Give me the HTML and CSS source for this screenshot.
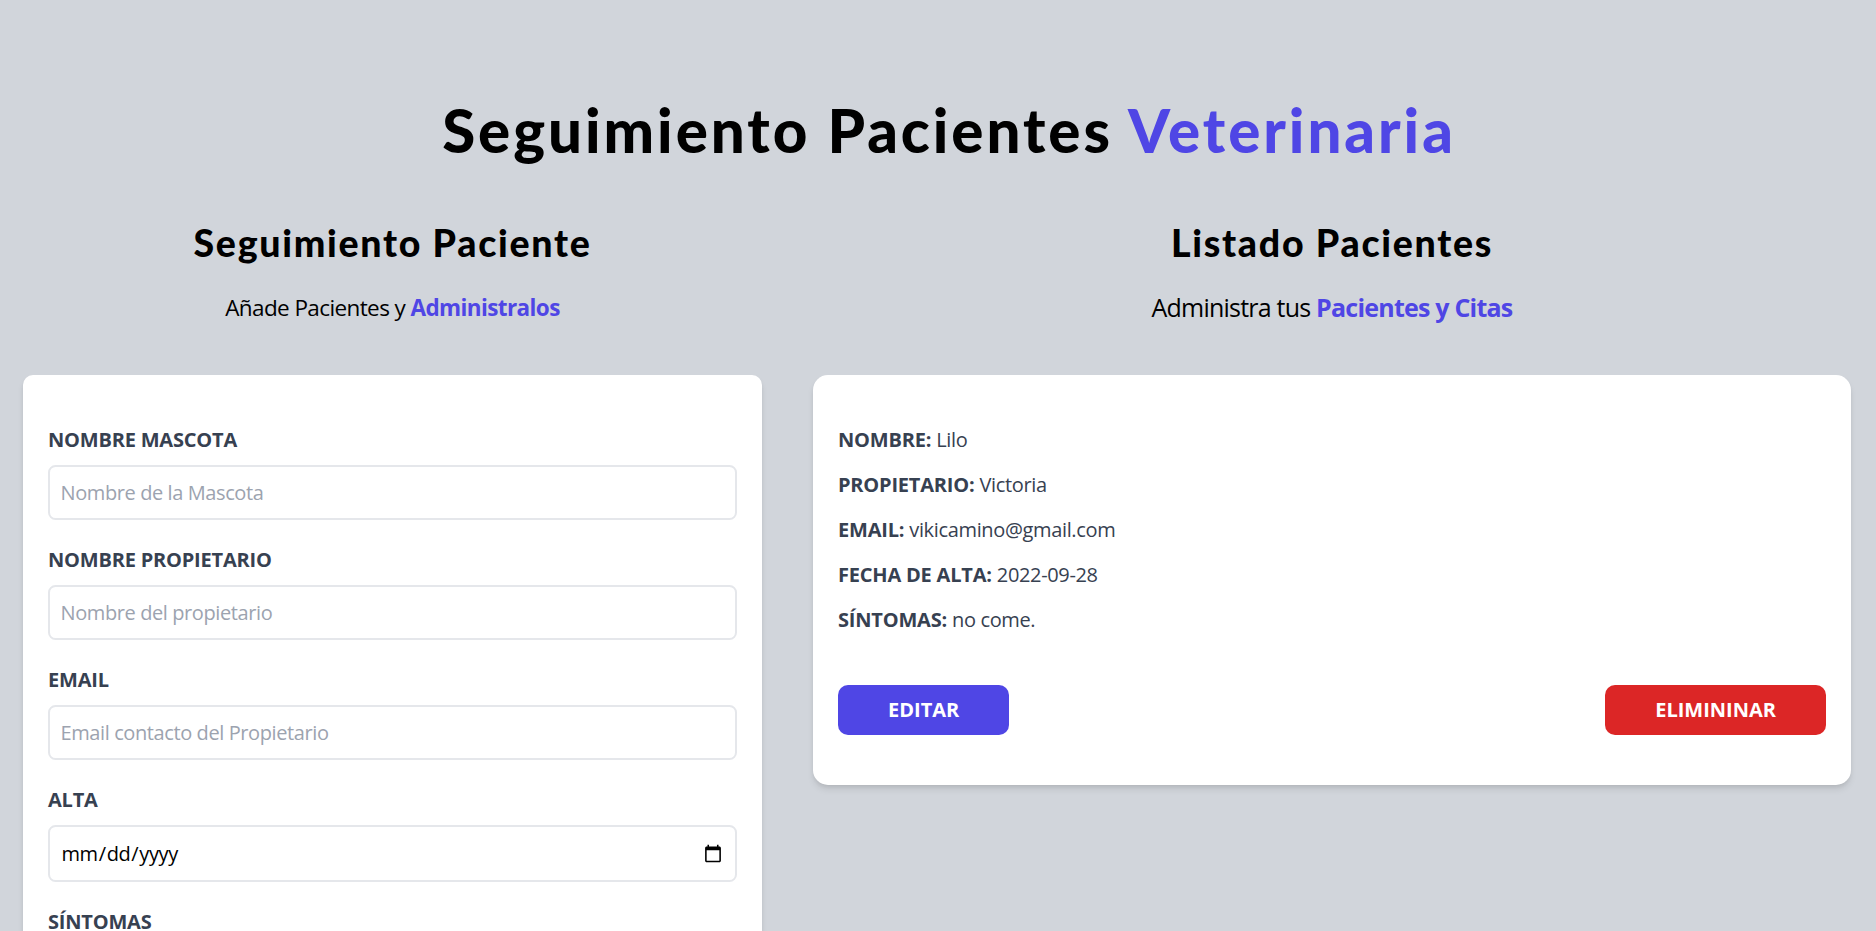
FILE: index.html
```html
<!DOCTYPE html>
<html lang="es">
<head>
<meta charset="utf-8">
<title>Seguimiento Pacientes Veterinaria</title>
<link rel="stylesheet" href="styles.css">
</head>
<body>
<div class="page">
  <h1 class="title">Seguimiento Pacientes <span class="accent">Veterinaria</span></h1>
  <div class="columns">
    <div class="col-form">
      <h2 class="col-title">Seguimiento Paciente</h2>
      <p class="col-sub">Añade Pacientes y <span class="accent-bold">Administralos</span></p>
      <form class="card form-card">
        <div class="field">
          <label class="label" for="mascota">Nombre Mascota</label>
          <input class="input" id="mascota" type="text" placeholder="Nombre de la Mascota">
        </div>
        <div class="field">
          <label class="label" for="propietario">Nombre Propietario</label>
          <input class="input" id="propietario" type="text" placeholder="Nombre del propietario">
        </div>
        <div class="field">
          <label class="label" for="email">Email</label>
          <input class="input" id="email" type="email" placeholder="Email contacto del Propietario">
        </div>
        <div class="field">
          <label class="label" for="alta">Alta</label>
          <input class="input input-date" id="alta" type="date">
        </div>
        <div class="field">
          <label class="label" for="sintomas">Síntomas</label>
          <textarea class="input textarea" id="sintomas" placeholder="Describe los Síntomas"></textarea>
        </div>
        <button class="submit" type="button">Agregar Paciente</button>
      </form>
    </div>
    <div class="col-list">
      <h2 class="col-title">Listado Pacientes</h2>
      <p class="col-sub col-sub-lg">Administra tus <span class="accent-bold">Pacientes y Citas</span></p>
      <div class="card patient-card">
        <p class="row">Nombre: <span class="value">Lilo</span></p>
        <p class="row">Propietario: <span class="value">Victoria</span></p>
        <p class="row">Email: <span class="value">vikicamino@gmail.com</span></p>
        <p class="row">Fecha de Alta: <span class="value">2022-09-28</span></p>
        <p class="row">Síntomas: <span class="value">no come.</span></p>
        <div class="actions">
          <button class="btn btn-edit" type="button">Editar</button>
          <button class="btn btn-delete" type="button">Elimininar</button>
        </div>
      </div>
    </div>
  </div>
</div>
</body>
</html>
```
FILE: styles.css
```css
* { box-sizing: border-box; }
html, body { margin: 0; padding: 0; }
body {
  background: #d1d5db;
  font-family: "Open Sans", "Noto Sans", sans-serif;
  color: #000;
}
.page {
  padding-top: 100px;
}
.title {
  margin: 0;
  padding-left: 22px;
  text-align: center;
  font-family: "Lato", "Open Sans", sans-serif;
  font-weight: 900;
  font-size: 60px;
  line-height: 60px;
  letter-spacing: 2.95px;
}
.accent { color: #4f46e5; }
.accent-bold { color: #4f46e5; font-weight: 700; }
.columns {
  display: flex;
  margin-top: 60px;
  padding: 0 25px 0 23px;
  gap: 51px;
  align-items: flex-start;
}
.col-form { flex: 0 0 739px; }
.col-list { flex: 1 1 auto; }
.col-title {
  margin: 0;
  text-align: center;
  font-family: "Lato", "Open Sans", sans-serif;
  font-weight: 900;
  font-size: 37.5px;
  line-height: 45px;
  letter-spacing: 1.7px;
}
.col-sub {
  margin: 25px 0 50px;
  text-align: center;
  font-size: 22.5px;
  line-height: 35px;
  letter-spacing: -0.6px;
}
.col-sub-lg {
  font-size: 25px;
  letter-spacing: -0.78px;
}
.card {
  background: #fff;
  box-shadow: 0 5px 7.5px -1.25px rgba(0,0,0,0.1), 0 2.5px 5px -2.5px rgba(0,0,0,0.1);
}
.form-card {
  padding: 50px 25px;
  border-radius: 10px;
  margin-bottom: 50px;
}
.field { margin-bottom: 25px; }
.label {
  display: block;
  font-size: 20px;
  line-height: 30px;
  font-weight: 700;
  color: #374151;
  text-transform: uppercase;
  letter-spacing: -0.2px;
}
.input {
  display: block;
  width: 100%;
  margin-top: 10px;
  padding: 10.5px 10.5px;
  border: 2px solid #e5e7eb;
  border-radius: 7.5px;
  font-family: inherit;
  font-size: 20px;
  line-height: 30px;
  color: #000;
  background: #fff;
  outline: none;
  letter-spacing: -0.4px;
}
.input::placeholder { color: #9ca3af; }
.input-date { height: 57px; }
.textarea { height: 90px; resize: vertical; }
.submit {
  display: block;
  width: 100%;
  padding: 15px;
  border: 0;
  background: #4f46e5;
  color: #fff;
  font-family: inherit;
  font-weight: 700;
  font-size: 20px;
  text-transform: uppercase;
}
.patient-card {
  padding: 50px 25px;
  border-radius: 15px;
}
.row {
  margin: 0 0 15px;
  font-size: 20px;
  line-height: 30px;
  font-weight: 700;
  color: #374151;
  text-transform: uppercase;
  letter-spacing: -0.2px;
}
.value {
  font-weight: 400;
  text-transform: none;
  letter-spacing: -0.35px;
}
.actions {
  display: flex;
  justify-content: space-between;
  margin-top: 50px;
}
.btn {
  padding: 10px 50px;
  border: 0;
  border-radius: 10px;
  color: #fff;
  font-family: inherit;
  font-weight: 700;
  font-size: 20px;
  line-height: 30px;
  text-transform: uppercase;
}
.btn-edit { background: #4f46e5; }
.btn-delete { background: #dc2626; }
```
